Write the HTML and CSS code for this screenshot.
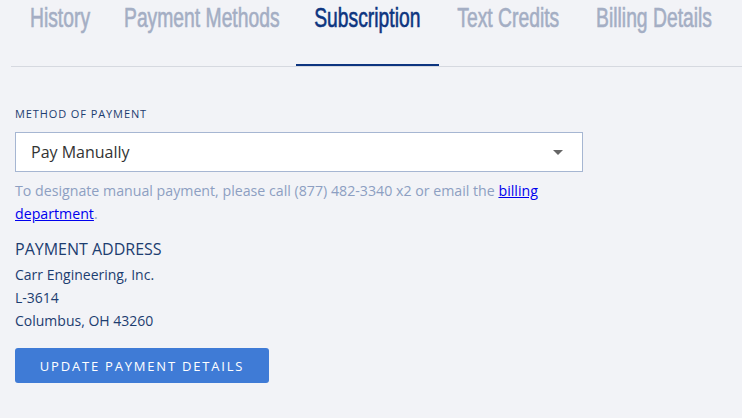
FILE: index.html
```html
<!DOCTYPE html>
<html>
<head>
<meta charset="utf-8">
<link rel="stylesheet" href="styles.css">
</head>
<body>
<div class="page">
  <nav class="tabs">
    <a class="tab tab-history"><span class="tab-text">History</span></a>
    <a class="tab tab-methods"><span class="tab-text">Payment Methods</span></a>
    <a class="tab tab-subscription active"><span class="tab-text">Subscription</span></a>
    <a class="tab tab-credits"><span class="tab-text">Text Credits</span></a>
    <a class="tab tab-billing"><span class="tab-text">Billing Details</span></a>
  </nav>
  <section class="content">
    <label class="field-label">METHOD OF PAYMENT</label>
    <div class="select">
      <span class="select-value">Pay Manually</span>
      <span class="caret"></span>
    </div>
    <p class="help">To designate manual payment, please call (877) 482-3340 x2 or email the <a href="#" class="link">billing department</a>.</p>
    <h3 class="address-title">PAYMENT ADDRESS</h3>
    <div class="address">
      <div>Carr Engineering, Inc.</div>
      <div>L-3614</div>
      <div>Columbus, OH 43260</div>
    </div>
    <button class="btn">UPDATE PAYMENT DETAILS</button>
  </section>
</div>
</body>
</html>
```
FILE: styles.css
```css
html, body {
  margin: 0;
  padding: 0;
  background: #f2f3f7;
}
body {
  font-family: "Open Sans", "Noto Sans", sans-serif;
}
.page {
  padding-left: 11px;
}
.tabs {
  display: flex;
  padding-left: 1px;
  border-bottom: 1px solid #d6d9e0;
  height: 67px;
  box-sizing: border-box;
  white-space: nowrap;
}
.tab {
  display: flex;
  justify-content: center;
  align-items: flex-start;
  flex: none;
  font-family: "Liberation Sans", Arial, sans-serif;
  font-size: 27px;
  line-height: 36px;
  color: #a4aec4;
  box-sizing: border-box;
  height: 66px;
}
.tab-text {
  display: inline-block;
  transform: scaleX(0.715);
  transform-origin: center;
  -webkit-text-stroke: 0.6px currentColor;
}
.tab-history { width: 96px; }
.tab-methods { width: 188px; }
.tab-subscription { width: 143px; }
.tab-credits { width: 138px; }
.tab-billing { width: 155px; }
.tab.active {
  color: #0d3580;
  border-bottom: 2px solid #0d3580;
}
.content {
  padding: 39px 0 0 4px;
}
.field-label {
  display: block;
  font-size: 11px;
  line-height: 16px;
  color: #1d3d70;
  letter-spacing: 0.9px;
}
.select {
  margin-top: 10px;
  width: 568px;
  height: 40px;
  box-sizing: border-box;
  background: #fff;
  border: 1px solid #a6b6d2;
  display: flex;
  align-items: center;
  justify-content: space-between;
  padding: 0 19px 0 15px;
}
.select-value {
  font-size: 16px;
  color: #333;
}
.caret {
  width: 0;
  height: 0;
  border-left: 5px solid transparent;
  border-right: 5px solid transparent;
  border-top: 5px solid #666;
}
.help {
  margin: 7px 0 0;
  font-size: 14.2px;
  line-height: 23px;
  color: #8d9fc2;
  width: 560px;
}
.link {
  color: #0000ee;
}
.address-title {
  margin: 13px 0 0;
  font-size: 16px;
  font-weight: normal;
  line-height: 22px;
  color: #1d3d70;
}
.address {
  margin-top: 3px;
  font-size: 14px;
  line-height: 23px;
  color: #1d3d70;
}
.btn {
  margin-top: 16px;
  display: block;
  width: 254px;
  height: 35px;
  border: none;
  border-radius: 3px;
  background: #3f7bd6;
  color: #fff;
  font-family: "Open Sans", "Noto Sans", sans-serif;
  font-size: 13px;
  letter-spacing: 1.8px;
  padding: 0;
}
```
